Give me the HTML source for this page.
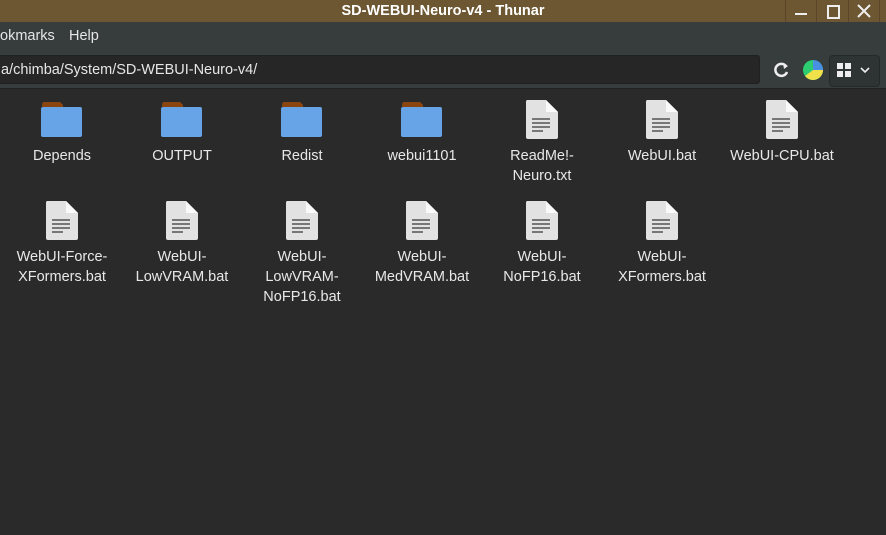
<!DOCTYPE html>
<html><head><style>
body{margin:0;width:886px;height:534px;overflow:hidden;background:#2a2a2a;font-family:"Liberation Sans",sans-serif;position:relative}
.title{position:absolute;left:0;top:0;width:886px;height:22px;background:#6d5732;color:#fff;font-weight:bold;font-size:14.5px;text-align:center;line-height:22px}
.menu{position:absolute;top:22px;left:0;width:886px;height:66px;background:#373d3d}
.menu .m{position:absolute;top:6px;color:#e6e6e6;font-size:14.5px}
.path{position:absolute;left:-4px;top:55px;width:764px;height:29px;background:#262626;border:1px solid #1f2121;border-radius:3px;color:#e6e6e6;font-size:14.5px;line-height:28px;padding-left:4px;box-sizing:border-box}
.item{position:absolute;width:120px;text-align:center;color:#e8e8e8;font-size:14.5px;line-height:20px}
.item svg{display:block;margin:0 auto}
.wb{position:absolute;top:0;width:30px;height:22px;border-left:1px solid #5a4628}
</style></head><body>
<div class="title">SD-WEBUI-Neuro-v4 - Thunar
<div class="wb" style="left:785px"><div style="position:absolute;left:9px;top:13px;width:12px;height:2px;background:#eee"></div></div>
<div class="wb" style="left:816px"><div style="position:absolute;left:10px;top:5px;width:9px;height:10px;border:2px solid #eee"></div></div>
<div class="wb" style="left:848px;border-right:1px solid #5a4628"><svg width="30" height="22" style="position:absolute;left:0;top:0"><path d="M9 5L21 17M21 5L9 17" stroke="#eee" stroke-width="2"/></svg></div>
</div>
<div class="menu">
<div class="m" style="left:0">okmarks</div><div class="m" style="left:69px">Help</div>
</div>
<div class="path">a/chimba/System/SD-WEBUI-Neuro-v4/</div>
<svg width="20" height="20" style="position:absolute;left:772px;top:60px"><path d="M14 6A6 6 0 1 0 15 12" fill="none" stroke="#eee" stroke-width="2.5"/><path d="M11 3L16 6L12 9Z" fill="#eee"/></svg>
<svg width="22" height="22" style="position:absolute;left:802px;top:59px"><circle cx="11" cy="11" r="10" fill="#2ecc71"/><path d="M11 11L11 1A10 10 0 0 1 21 11Z" fill="#4a90e2"/><path d="M11 11L21 11A10 10 0 0 1 3 17Z" fill="#f0e04a"/></svg>
<div style="position:absolute;left:829px;top:55px;width:49px;height:30px;background:#2e3333;border:1px solid #252828;border-radius:4px"></div>
<svg width="50" height="30" style="position:absolute;left:829px;top:55px"><rect x="8" y="8" width="6" height="6" fill="#eee"/><rect x="16" y="8" width="6" height="6" fill="#eee"/><rect x="8" y="16" width="6" height="6" fill="#eee"/><rect x="16" y="16" width="6" height="6" fill="#eee"/><path d="M32 13l4 4l4-4" fill="none" stroke="#eee" stroke-width="1.6"/></svg>
<div style="position:absolute;left:0;top:88px;width:886px;height:446px;background:#2a2a2a;border-top:1px solid #222"></div>

<div class="item" style="left:2px;top:101px"><svg width="42" height="36"><path d="M1 4Q1 1 3 1H19L22 4V9H1Z" fill="#8a4511"/><rect x="0" y="6" width="41" height="30" rx="2" fill="#67a3e7"/></svg><div style="margin-top:9px">Depends</div></div>
<div class="item" style="left:122px;top:101px"><svg width="42" height="36"><path d="M1 4Q1 1 3 1H19L22 4V9H1Z" fill="#8a4511"/><rect x="0" y="6" width="41" height="30" rx="2" fill="#67a3e7"/></svg><div style="margin-top:9px">OUTPUT</div></div>
<div class="item" style="left:242px;top:101px"><svg width="42" height="36"><path d="M1 4Q1 1 3 1H19L22 4V9H1Z" fill="#8a4511"/><rect x="0" y="6" width="41" height="30" rx="2" fill="#67a3e7"/></svg><div style="margin-top:9px">Redist</div></div>
<div class="item" style="left:362px;top:101px"><svg width="42" height="36"><path d="M1 4Q1 1 3 1H19L22 4V9H1Z" fill="#8a4511"/><rect x="0" y="6" width="41" height="30" rx="2" fill="#67a3e7"/></svg><div style="margin-top:9px">webui1101</div></div>

<div class="item" style="left:482px;top:99px"><svg width="34" height="41"><path d="M2 1H21L33 13V38Q33 40 31 40H3Q1 40 1 38V2Z" fill="#e2e2e2"/><path d="M21 1L33 13H21Z" fill="#fafafa"/><g fill="#777"><rect x="7" y="19" width="18" height="2"/><rect x="7" y="23" width="18" height="2"/><rect x="7" y="27" width="18" height="2"/><rect x="7" y="31" width="11" height="2"/></g></svg><div style="margin-top:6px">ReadMe!-<br>Neuro.txt</div></div>
<div class="item" style="left:602px;top:99px"><svg width="34" height="41"><path d="M2 1H21L33 13V38Q33 40 31 40H3Q1 40 1 38V2Z" fill="#e2e2e2"/><path d="M21 1L33 13H21Z" fill="#fafafa"/><g fill="#777"><rect x="7" y="19" width="18" height="2"/><rect x="7" y="23" width="18" height="2"/><rect x="7" y="27" width="18" height="2"/><rect x="7" y="31" width="11" height="2"/></g></svg><div style="margin-top:6px">WebUI.bat</div></div>
<div class="item" style="left:722px;top:99px"><svg width="34" height="41"><path d="M2 1H21L33 13V38Q33 40 31 40H3Q1 40 1 38V2Z" fill="#e2e2e2"/><path d="M21 1L33 13H21Z" fill="#fafafa"/><g fill="#777"><rect x="7" y="19" width="18" height="2"/><rect x="7" y="23" width="18" height="2"/><rect x="7" y="27" width="18" height="2"/><rect x="7" y="31" width="11" height="2"/></g></svg><div style="margin-top:6px">WebUI-CPU.bat</div></div>

<div class="item" style="left:2px;top:200px"><svg width="34" height="41"><path d="M2 1H21L33 13V38Q33 40 31 40H3Q1 40 1 38V2Z" fill="#e2e2e2"/><path d="M21 1L33 13H21Z" fill="#fafafa"/><g fill="#777"><rect x="7" y="19" width="18" height="2"/><rect x="7" y="23" width="18" height="2"/><rect x="7" y="27" width="18" height="2"/><rect x="7" y="31" width="11" height="2"/></g></svg><div style="margin-top:6px">WebUI-Force-<br>XFormers.bat</div></div>
<div class="item" style="left:122px;top:200px"><svg width="34" height="41"><path d="M2 1H21L33 13V38Q33 40 31 40H3Q1 40 1 38V2Z" fill="#e2e2e2"/><path d="M21 1L33 13H21Z" fill="#fafafa"/><g fill="#777"><rect x="7" y="19" width="18" height="2"/><rect x="7" y="23" width="18" height="2"/><rect x="7" y="27" width="18" height="2"/><rect x="7" y="31" width="11" height="2"/></g></svg><div style="margin-top:6px">WebUI-<br>LowVRAM.bat</div></div>
<div class="item" style="left:242px;top:200px"><svg width="34" height="41"><path d="M2 1H21L33 13V38Q33 40 31 40H3Q1 40 1 38V2Z" fill="#e2e2e2"/><path d="M21 1L33 13H21Z" fill="#fafafa"/><g fill="#777"><rect x="7" y="19" width="18" height="2"/><rect x="7" y="23" width="18" height="2"/><rect x="7" y="27" width="18" height="2"/><rect x="7" y="31" width="11" height="2"/></g></svg><div style="margin-top:6px">WebUI-<br>LowVRAM-<br>NoFP16.bat</div></div>
<div class="item" style="left:362px;top:200px"><svg width="34" height="41"><path d="M2 1H21L33 13V38Q33 40 31 40H3Q1 40 1 38V2Z" fill="#e2e2e2"/><path d="M21 1L33 13H21Z" fill="#fafafa"/><g fill="#777"><rect x="7" y="19" width="18" height="2"/><rect x="7" y="23" width="18" height="2"/><rect x="7" y="27" width="18" height="2"/><rect x="7" y="31" width="11" height="2"/></g></svg><div style="margin-top:6px">WebUI-<br>MedVRAM.bat</div></div>
<div class="item" style="left:482px;top:200px"><svg width="34" height="41"><path d="M2 1H21L33 13V38Q33 40 31 40H3Q1 40 1 38V2Z" fill="#e2e2e2"/><path d="M21 1L33 13H21Z" fill="#fafafa"/><g fill="#777"><rect x="7" y="19" width="18" height="2"/><rect x="7" y="23" width="18" height="2"/><rect x="7" y="27" width="18" height="2"/><rect x="7" y="31" width="11" height="2"/></g></svg><div style="margin-top:6px">WebUI-<br>NoFP16.bat</div></div>
<div class="item" style="left:602px;top:200px"><svg width="34" height="41"><path d="M2 1H21L33 13V38Q33 40 31 40H3Q1 40 1 38V2Z" fill="#e2e2e2"/><path d="M21 1L33 13H21Z" fill="#fafafa"/><g fill="#777"><rect x="7" y="19" width="18" height="2"/><rect x="7" y="23" width="18" height="2"/><rect x="7" y="27" width="18" height="2"/><rect x="7" y="31" width="11" height="2"/></g></svg><div style="margin-top:6px">WebUI-<br>XFormers.bat</div></div>
</body></html>
